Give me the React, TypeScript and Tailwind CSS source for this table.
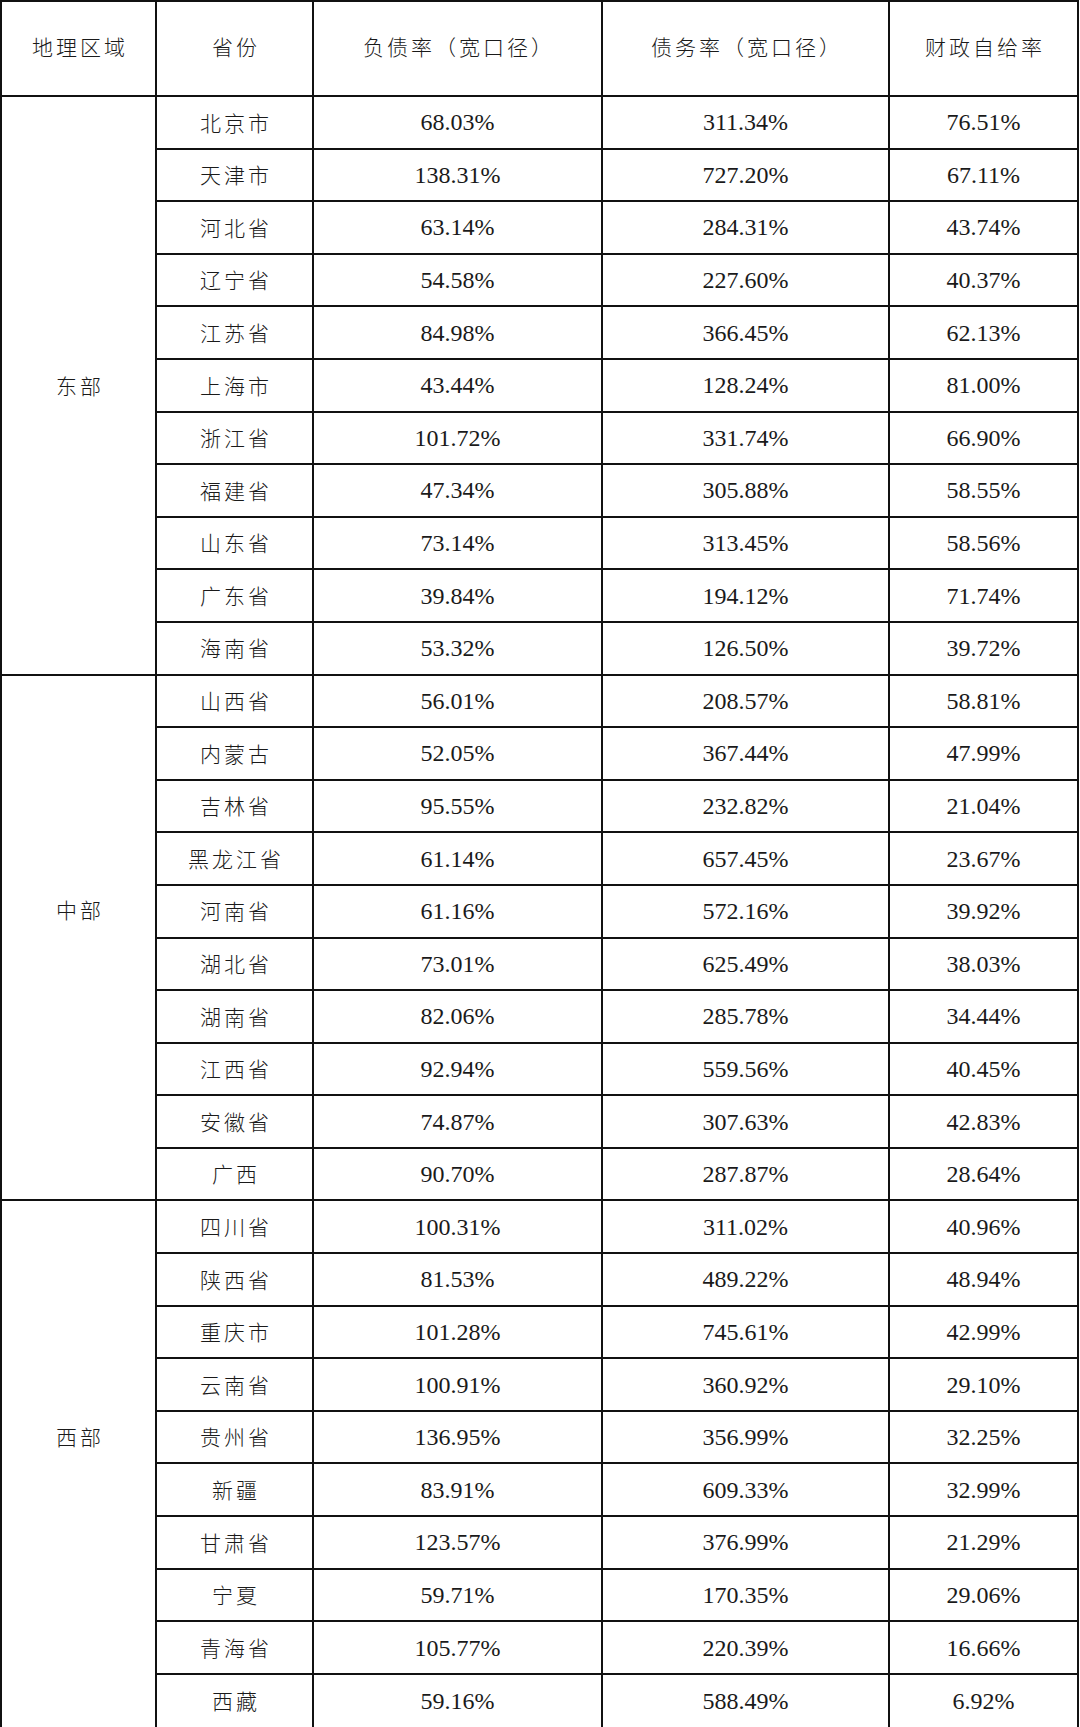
import React from "react";

type Row = [string, string, string, string];

const groups: { region: string; rows: Row[] }[] = [
  {
    region: "东部",
    rows: [
      ["北京市", "68.03%", "311.34%", "76.51%"],
      ["天津市", "138.31%", "727.20%", "67.11%"],
      ["河北省", "63.14%", "284.31%", "43.74%"],
      ["辽宁省", "54.58%", "227.60%", "40.37%"],
      ["江苏省", "84.98%", "366.45%", "62.13%"],
      ["上海市", "43.44%", "128.24%", "81.00%"],
      ["浙江省", "101.72%", "331.74%", "66.90%"],
      ["福建省", "47.34%", "305.88%", "58.55%"],
      ["山东省", "73.14%", "313.45%", "58.56%"],
      ["广东省", "39.84%", "194.12%", "71.74%"],
      ["海南省", "53.32%", "126.50%", "39.72%"],
    ],
  },
  {
    region: "中部",
    rows: [
      ["山西省", "56.01%", "208.57%", "58.81%"],
      ["内蒙古", "52.05%", "367.44%", "47.99%"],
      ["吉林省", "95.55%", "232.82%", "21.04%"],
      ["黑龙江省", "61.14%", "657.45%", "23.67%"],
      ["河南省", "61.16%", "572.16%", "39.92%"],
      ["湖北省", "73.01%", "625.49%", "38.03%"],
      ["湖南省", "82.06%", "285.78%", "34.44%"],
      ["江西省", "92.94%", "559.56%", "40.45%"],
      ["安徽省", "74.87%", "307.63%", "42.83%"],
      ["广西", "90.70%", "287.87%", "28.64%"],
    ],
  },
  {
    region: "西部",
    rows: [
      ["四川省", "100.31%", "311.02%", "40.96%"],
      ["陕西省", "81.53%", "489.22%", "48.94%"],
      ["重庆市", "101.28%", "745.61%", "42.99%"],
      ["云南省", "100.91%", "360.92%", "29.10%"],
      ["贵州省", "136.95%", "356.99%", "32.25%"],
      ["新疆", "83.91%", "609.33%", "32.99%"],
      ["甘肃省", "123.57%", "376.99%", "21.29%"],
      ["宁夏", "59.71%", "170.35%", "29.06%"],
      ["青海省", "105.77%", "220.39%", "16.66%"],
      ["西藏", "59.16%", "588.49%", "6.92%"],
    ],
  },
];

const cn =
  "bg-white flex items-center justify-center text-[21px] tracking-[3px] pl-[3px] text-[#1a1a1a] font-['Noto_Sans_CJK_SC',sans-serif] font-light";
const num =
  "bg-white flex items-center justify-center text-[24px] text-[#1a1a1a] font-['Liberation_Serif',serif]";

const regionCls = [
  "col-start-1 row-start-2 row-span-11",
  "col-start-1 row-start-13 row-span-10 pb-[55px]",
  "col-start-1 row-start-23 row-span-10 pb-[55px]",
];

export default function App() {
  return (
    <div className="w-[1080px] h-[1727px] bg-white">
      <div className="w-[1079px] h-[1727px] bg-[#111] pl-[2px] pr-[2px] pt-[2px] grid grid-cols-[153px_155px_287px_285px_187px] grid-rows-[93px_repeat(30,50.6px)_1fr] gap-[2px]">
        <div className={cn + " col-start-1 row-start-1 pb-[3px]"}>地理区域</div>
        <div className={cn + " col-start-2 row-start-1 pb-[3px]"}>省份</div>
        <div className={cn + " col-start-3 row-start-1 pb-[3px]"}>负债率（宽口径）</div>
        <div className={cn + " col-start-4 row-start-1 pb-[3px]"}>债务率（宽口径）</div>
        <div className={cn + " col-start-5 row-start-1 pb-[3px]"}>财政自给率</div>
        {groups.map((g, gi) => (
          <React.Fragment key={g.region}>
            <div className={cn + " " + regionCls[gi]}>{g.region}</div>
            {g.rows.map((r) => (
              <div key={r[0]} className="contents">
                <div className={cn + " col-start-2"}>{r[0]}</div>
                <div className={num + " col-start-3"}>{r[1]}</div>
                <div className={num + " col-start-4"}>{r[2]}</div>
                <div className={num + " col-start-5"}>{r[3]}</div>
              </div>
            ))}
          </React.Fragment>
        ))}
      </div>
    </div>
  );
}
